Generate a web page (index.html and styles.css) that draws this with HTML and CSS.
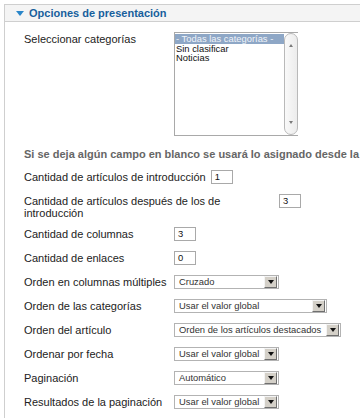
FILE: index.html
```html
<!DOCTYPE html>
<html lang="es">
<head>
<meta charset="utf-8">
<title>Opciones de presentación</title>
<link rel="stylesheet" href="styles.css">
</head>
<body>
<div class="panel">
  <div class="panel-head">
    <span class="arrow"></span>
    <h3 class="panel-title">Opciones de presentación</h3>
  </div>
  <div class="panel-body">
    <div class="row">
      <label class="lbl">Seleccionar categorías</label>
      <div class="listbox">
        <div class="options">
          <div class="opt opt-sel">- Todas las categorías -</div>
          <div class="opt">Sin clasificar</div>
          <div class="opt">Noticias</div>
        </div>
        <div class="vscroll">
          <span class="tri-up"></span>
          <span class="tri-down"></span>
        </div>
      </div>
    </div>

    <div class="note">Si se deja algún campo en blanco se usará lo asignado desde la</div>

    <div class="row">
      <label class="lbl">Cantidad de artículos de introducción</label>
      <div class="txt">1</div>
    </div>
    <div class="row">
      <label class="lbl">Cantidad de artículos después de los de introducción</label>
      <div class="txt">3</div>
    </div>
    <div class="row">
      <label class="lbl">Cantidad de columnas</label>
      <div class="txt">3</div>
    </div>
    <div class="row">
      <label class="lbl">Cantidad de enlaces</label>
      <div class="txt">0</div>
    </div>
    <div class="row">
      <label class="lbl">Orden en columnas múltiples</label>
      <div class="sel sel-s"><span class="sel-text">Cruzado</span><span class="sel-btn"><span class="tri"></span></span></div>
    </div>
    <div class="row">
      <label class="lbl">Orden de las categorías</label>
      <div class="sel sel-m"><span class="sel-text">Usar el valor global</span><span class="sel-btn"><span class="tri"></span></span></div>
    </div>
    <div class="row">
      <label class="lbl">Orden del artículo</label>
      <div class="sel sel-l"><span class="sel-text">Orden de los artículos destacados</span><span class="sel-btn"><span class="tri"></span></span></div>
    </div>
    <div class="row">
      <label class="lbl">Ordenar por fecha</label>
      <div class="sel sel-s"><span class="sel-text">Usar el valor global</span><span class="sel-btn"><span class="tri"></span></span></div>
    </div>
    <div class="row">
      <label class="lbl">Paginación</label>
      <div class="sel sel-s"><span class="sel-text">Automático</span><span class="sel-btn"><span class="tri"></span></span></div>
    </div>
    <div class="row">
      <label class="lbl">Resultados de la paginación</label>
      <div class="sel sel-s"><span class="sel-text">Usar el valor global</span><span class="sel-btn"><span class="tri"></span></span></div>
    </div>
  </div>
</div>
</body>
</html>
```

FILE: styles.css
```css
html, body {
  margin: 0;
  padding: 0;
  overflow: hidden;
  background: #ffffff;
}
body {
  font-family: "Liberation Sans", Arial, sans-serif;
  font-size: 11px;
  color: #222;
}
.panel {
  margin: 4px 0 0 4px;
  width: 700px;
  border-top: 1px solid #cfcfcf;
  border-left: 1px solid #cfcfcf;
}
.panel-head {
  height: 16px;
  background: #f4f4f4;
  border-bottom: 1px solid #cfcfcf;
  display: flex;
  align-items: center;
  padding-left: 11px;
}
.arrow {
  width: 0;
  height: 0;
  border-left: 4.5px solid transparent;
  border-right: 4.5px solid transparent;
  border-top: 5px solid #2a86c9;
  margin-right: 5px;
  margin-top: 1px;
}
.panel-title {
  margin: 0;
  font-size: 11px;
  font-weight: bold;
  color: #175f9c;
  line-height: 16px;
}
.panel-body {
  padding: 5px 0 20px 19px;
}
.row {
  display: flex;
  align-items: flex-start;
}
.lbl {
  flex: none;
  min-width: 145px;
  max-width: 250px;
  padding-right: 5px;
  margin: 6px 0 3px;
  line-height: 12px;
  color: #222;
}
.listbox {
  margin: 5px 0;
  width: 124px;
  height: 104px;
  box-sizing: border-box;
  border: 1px solid #a9a9a9;
  border-right: none;
  display: flex;
}
.options {
  flex: 1;
  padding-top: 1px;
  font-size: 9.4px;
}
.opt {
  height: 9.7px;
  line-height: 9.7px;
  padding-left: 1px;
  white-space: nowrap;
  color: #111;
}
.opt-sel {
  background: #8ea7c6;
  color: #eef3f9;
}
.vscroll {
  position: relative;
  width: 14px;
  height: 102px;
  box-sizing: border-box;
  border: 1px solid #b9b9b9;
  border-radius: 7px;
  background: linear-gradient(to right, #f9f9f9, #ececec);
}
.tri-up, .tri-down {
  position: absolute;
  left: 4px;
  width: 0;
  height: 0;
  border-left: 2.5px solid transparent;
  border-right: 2.5px solid transparent;
}
.tri-up {
  top: 10px;
  border-bottom: 3px solid #7a7a7a;
}
.tri-down {
  bottom: 10px;
  border-top: 3px solid #7a7a7a;
}
.note {
  padding-top: 7px;
  margin-bottom: 5px;
  line-height: 12px;
  font-weight: bold;
  color: #666;
  white-space: nowrap;
}
.txt {
  margin: 5px 0;
  width: 22px;
  height: 14px;
  box-sizing: border-box;
  border: 1px solid #a9a9a9;
  padding-left: 3px;
  font-size: 9.4px;
  line-height: 12px;
  color: #111;
}
.sel {
  margin: 5px 0;
  height: 14px;
  box-sizing: border-box;
  border: 1px solid #b3b3b3;
  display: flex;
  align-items: stretch;
  background: #fff;
}
.sel-s { width: 105px; }
.sel-m { width: 153px; }
.sel-l { width: 167px; }
.sel-text {
  flex: 1;
  padding-left: 4px;
  font-size: 9.4px;
  line-height: 12px;
  color: #333;
  white-space: nowrap;
  overflow: hidden;
}
.sel-btn {
  width: 13px;
  margin: 0 1px 0 0;
  box-sizing: border-box;
  background: #d4d0c8;
  border-top: 1px solid #f4f4f4;
  border-left: 1px solid #f4f4f4;
  border-right: 1px solid #6f6f6f;
  border-bottom: 1px solid #6f6f6f;
  display: flex;
  align-items: center;
  justify-content: center;
}
.tri {
  width: 0;
  height: 0;
  border-left: 3.5px solid transparent;
  border-right: 3.5px solid transparent;
  border-top: 4px solid #111;
}
```
